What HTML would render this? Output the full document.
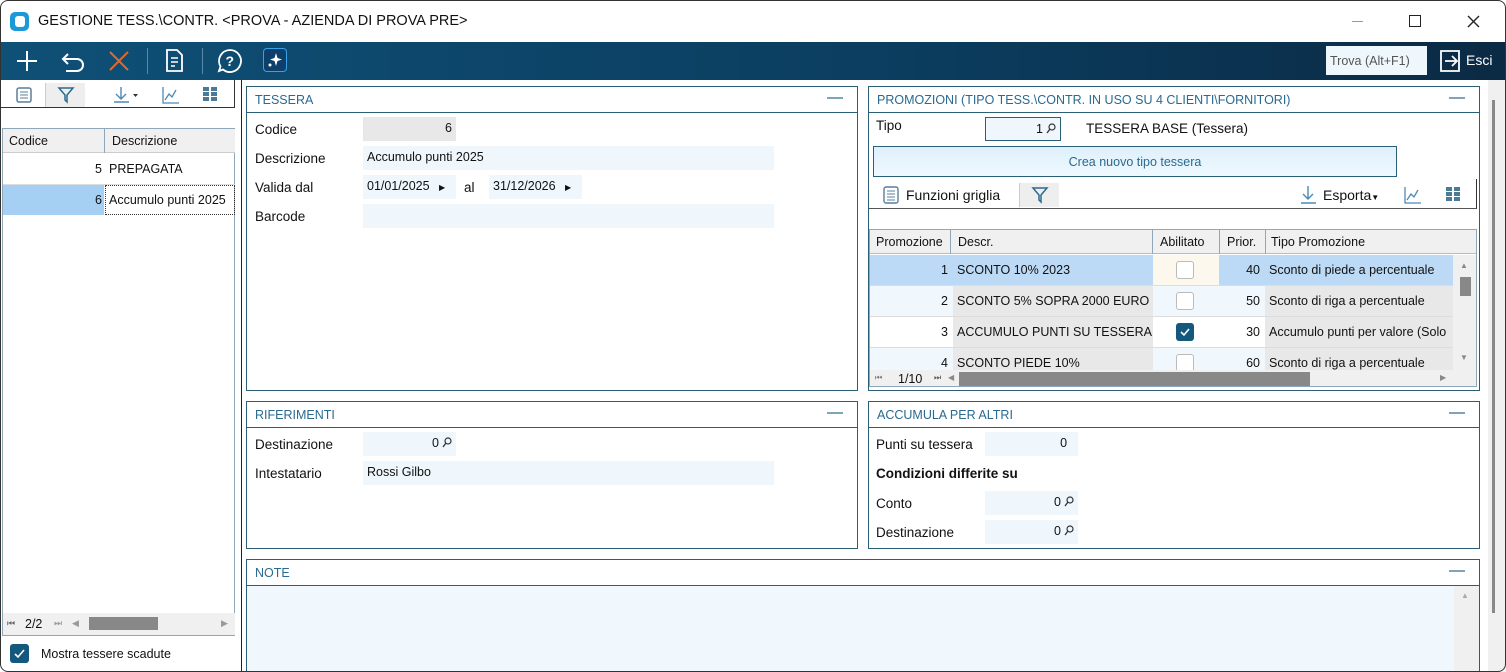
<!DOCTYPE html>
<html><head><meta charset="utf-8"><style>
*{box-sizing:border-box;margin:0;padding:0}
body{width:1506px;height:672px;overflow:hidden;background:#fff;font-family:"Liberation Sans",sans-serif;font-size:13px;color:#111;position:relative}
.a{position:absolute}
.win{left:0;top:0;width:1506px;height:672px;overflow:hidden}
.frame{position:absolute;left:0;top:0;width:1506px;height:672px;border:1px solid #333;border-radius:8px;z-index:10;pointer-events:none}
.panel{position:absolute;border:1px solid #2b5f78;background:#fff}
.ph{height:26px;border-bottom:1px solid #2b5f78;color:#2a6a90;font-size:12.5px;padding:6px 8px}
.min{position:absolute;right:14px;top:10px;width:16px;height:2px;background:#7fa3b8}
.fld{position:absolute;background:#eff7fc;height:24px;padding:4px 4px;font-size:12.5px}
.lbl{position:absolute;font-size:13.5px}
.r{text-align:right}
.tb{position:absolute;top:42px;left:0;width:1506px;height:38px;background:linear-gradient(90deg,#0f5077,#0b3d5f 60%,#0b2a44)}
.sep{position:absolute;top:6px;width:1px;height:26px;background:#5a88a8}
.mg{display:inline-block;width:10px;height:11px;vertical-align:-1px;margin-left:3px}
</style></head><body>
<div class="frame"></div>
<div class="a win">
<div class="a" style="left:10px;top:12px;width:19px;height:19px;background:#1a9ad8;border-radius:5px"><div class="a" style="left:5px;top:4px;width:10px;height:11px;background:#fff;border-radius:3px"></div></div>
<div class="a" style="left:38px;top:13px;font-size:14.5px">GESTIONE TESS.\CONTR. &lt;PROVA - AZIENDA DI PROVA PRE&gt;</div>
<div class="a" style="left:1352px;top:21px;width:11px;height:1px;background:#999"></div>
<div class="a" style="left:1409px;top:15px;width:12px;height:12px;border:1.5px solid #222"></div>
<svg class="a" style="left:1467px;top:15px" width="13" height="13"><path d="M1 1L12 12M12 1L1 12" stroke="#222" stroke-width="1.4"/></svg>
<div class="tb">
<svg class="a" style="left:15px;top:7px" width="24" height="24"><path d="M12 2V22M2 12H22" stroke="#fff" stroke-width="2"/></svg>
<svg class="a" style="left:60px;top:7px" width="26" height="24"><path d="M8 5L3 10L8 15M3 10H17A6 6 0 0 1 17 22H6" stroke="#fff" stroke-width="2" fill="none"/></svg>
<svg class="a" style="left:108px;top:8px" width="22" height="22"><path d="M2 2L20 20M20 2L2 20" stroke="#e06a2c" stroke-width="2"/></svg>
<div class="sep" style="left:147px"></div>
<svg class="a" style="left:163px;top:6px" width="24" height="26"><path d="M4 2H14L19 7V23H4Z" stroke="#fff" stroke-width="1.8" fill="none"/><path d="M8 10H15M8 14H15M8 18H12" stroke="#fff" stroke-width="1.5"/></svg>
<div class="sep" style="left:202px"></div>
<svg class="a" style="left:217px;top:6px" width="26" height="26"><path d="M13 2A11 11 0 1 1 6 21.5L2 23L3.5 18.5A11 11 0 0 1 13 2Z" stroke="#fff" stroke-width="1.8" fill="none"/><text x="8.5" y="18" fill="#fff" font-size="14" font-family="Liberation Sans" font-weight="bold">?</text></svg>
<div class="a" style="left:263px;top:6px;width:24px;height:24px;border:1.5px solid #3aa0e8;border-radius:4px;background:#0c3f6a"><svg width="21" height="21"><path d="M12 4L13.5 9L18 10.5L13.5 12L12 17L10.5 12L6 10.5L10.5 9Z" fill="#fff"/><circle cx="6" cy="16" r="1.5" fill="#fff"/></svg></div>
<div class="a" style="left:1326px;top:4px;width:101px;height:29px;background:#eef7fc;color:#555;padding:8px 4px;font-size:12.5px">Trova (Alt+F1)</div>
<svg class="a" style="left:1439px;top:7px" width="24" height="24"><path d="M2 2H20V22H2Z" stroke="#fff" stroke-width="1.8" fill="none"/><path d="M6 12H17M13 7L18 12L13 17" stroke="#fff" stroke-width="1.8" fill="none"/></svg>
<div class="a" style="left:1466px;top:10px;color:#fff;font-size:14px">Esci</div>
</div>
<div class="a" style="left:1px;top:80px;width:234px;height:28px;border-right:1px solid #333;border-bottom:1px solid #333"></div>
<svg class="a" style="left:15px;top:86px" width="18" height="18"><rect x="2" y="2" width="14" height="14" rx="2" stroke="#5a7f99" fill="none" stroke-width="1.5"/><path d="M5 6H13M5 9H13M5 12H13" stroke="#5a7f99"/></svg>
<div class="a" style="left:45px;top:83px;width:40px;height:24px;background:#eee;border-left:1px solid #ccc"><svg style="margin:3px 11px" width="18" height="18"><path d="M2 2H16L10 9V16L8 14V9Z" stroke="#2a6a90" fill="none" stroke-width="1.5"/></svg></div>
<svg class="a" style="left:112px;top:86px" width="28" height="18"><path d="M9 1V12M4 8L9 13L14 8M2 16H17" stroke="#4a8ab8" stroke-width="1.4" fill="none"/><path d="M21 8H26L23.5 11Z" fill="#333"/></svg>
<svg class="a" style="left:162px;top:86px" width="18" height="18"><path d="M1 1V17H17M3 14L7 8L10 11L14 4" stroke="#4a8ab8" stroke-width="1.3" fill="none"/></svg>
<svg class="a" style="left:203px;top:87px" width="15" height="15" fill="#4a7a9a"><rect x="0" y="0" width="6" height="4"/><rect x="8" y="0" width="6" height="4"/><rect x="0" y="5" width="6" height="4"/><rect x="8" y="5" width="6" height="4"/><rect x="0" y="10" width="6" height="4"/><rect x="8" y="10" width="6" height="4"/></svg>
<div class="a" style="left:2px;top:128px;width:233px;height:508px;border:1px solid #8ea8ba;border-top:none;background:#fff">
 <div class="a" style="left:0;top:0;width:232px;height:25px;background:#f0f0f0;border-top:1px solid #8ea8ba;border-bottom:1px solid #ccc"></div>
 <div class="a" style="left:101px;top:1px;width:1px;height:24px;background:#8ea8ba"></div>
 <div class="a" style="left:6px;top:6px;font-size:12.5px">Codice</div>
 <div class="a" style="left:109px;top:6px;font-size:12.5px">Descrizione</div>
 <div class="a r" style="left:0;top:34px;width:99px;font-size:12.5px">5</div>
 <div class="a" style="left:106px;top:34px;font-size:12.5px">PREPAGATA</div>
 <div class="a" style="left:0;top:56px;width:232px;height:1px;background:#ddd"></div>
 <div class="a" style="left:0;top:57px;width:101px;height:30px;background:#a5cff3"></div>
 <div class="a" style="left:102px;top:57px;width:130px;height:30px;border:1px dotted #333"></div>
 <div class="a r" style="left:0;top:65px;width:99px;font-size:12.5px">6</div>
 <div class="a" style="left:106px;top:65px;font-size:12.5px">Accumulo punti 2025</div>
 <div class="a" style="left:0;top:485px;width:232px;height:22px;background:#f0f0f0"></div>
 <div class="a" style="left:4px;top:490px;font-size:9px;color:#666">⏮</div>
 <div class="a" style="left:22px;top:489px;font-size:12.5px">2/2</div>
 <div class="a" style="left:51px;top:490px;font-size:9px;color:#999">⏭</div>
 <div class="a" style="left:69px;top:490px;font-size:9px;color:#999">◀</div>
 <div class="a" style="left:86px;top:489px;width:69px;height:13px;background:#888"></div>
 <div class="a" style="left:218px;top:490px;font-size:9px;color:#999">▶</div>
</div>
<div class="a" style="left:10px;top:644px;width:19px;height:19px;background:#15587e;border-radius:3px"><svg width="19" height="19"><path d="M5 10L8 13L14 6" stroke="#fff" stroke-width="1.6" fill="none"/></svg></div>
<div class="a" style="left:41px;top:647px;font-size:12.5px">Mostra tessere scadute</div>
<div class="a" style="left:241px;top:80px;width:1px;height:592px;background:#222"></div>
<div class="a" style="left:1488px;top:80px;width:18px;height:592px;background:#f0f0f0"></div>
<div class="a" style="left:1492px;top:100px;width:3px;height:513px;background:#888"></div>

<div class="panel" style="left:246px;top:86px;width:612px;height:305px"><div class="ph">TESSERA</div><div class="min"></div>
<div class="lbl" style="left:8px;top:35px">Codice</div><div class="fld r" style="left:116px;top:30px;width:93px;background:#e8e8e8">6</div>
<div class="lbl" style="left:8px;top:64px">Descrizione</div><div class="fld" style="left:116px;top:59px;width:411px">Accumulo punti 2025</div>
<div class="lbl" style="left:8px;top:93px">Valida dal</div><div class="fld" style="left:116px;top:88px;width:93px">01/01/2025 <span style="font-size:8px;margin-left:6px">▶</span></div>
<div class="lbl" style="left:217px;top:93px">al</div><div class="fld" style="left:242px;top:88px;width:93px">31/12/2026 <span style="font-size:8px;margin-left:6px">▶</span></div>
<div class="lbl" style="left:8px;top:122px">Barcode</div><div class="fld" style="left:116px;top:117px;width:411px"></div>
</div>

<div class="panel" style="left:868px;top:86px;width:612px;height:305px"><div class="ph">PROMOZIONI (TIPO TESS.\CONTR. IN USO SU 4 CLIENTI\FORNITORI)</div><div class="min"></div>
<div class="lbl" style="left:7px;top:31px">Tipo</div>
<div class="fld r" style="left:116px;top:30px;width:76px;border:1px solid #2b5f78">1<svg class="mg" viewBox="0 0 10 11"><circle cx="6" cy="4" r="3" stroke="#333" fill="none" stroke-width="1.2"/><path d="M4 6L1 10" stroke="#333" stroke-width="1.3"/></svg></div>
<div class="lbl" style="left:217px;top:34px">TESSERA BASE (Tessera)</div>
<div class="a" style="left:4px;top:59px;width:524px;height:31px;border:1px solid #2b5f78;background:linear-gradient(#dff0fb,#eef8fe);text-align:center;padding-top:8px;color:#2a6a90;font-size:12.5px">Crea nuovo tipo tessera</div>
<div class="a" style="left:0;top:92px;width:608px;height:30px;border-right:1px solid #333;border-bottom:1px solid #555"></div>
<svg class="a" style="left:13px;top:99px" width="18" height="18"><rect x="2" y="1" width="14" height="16" rx="2" stroke="#5a7f99" fill="none" stroke-width="1.4"/><path d="M5 5H13M5 8H13M5 11H13M5 14H13" stroke="#5a7f99"/></svg>
<div class="lbl" style="left:37px;top:100px;font-size:14px">Funzioni griglia</div>
<div class="a" style="left:150px;top:96px;width:40px;height:24px;background:#eee;border-left:1px solid #ccc"><svg style="margin:3px 11px" width="18" height="18"><path d="M2 2H16L10 9V16L8 14V9Z" stroke="#2a6a90" fill="none" stroke-width="1.5"/></svg></div>
<svg class="a" style="left:430px;top:98px" width="18" height="20"><path d="M9 1V14M4 9L9 14L14 9M2 18H17" stroke="#4a8ab8" stroke-width="1.4" fill="none"/></svg>
<div class="lbl" style="left:454px;top:100px;font-size:14px">Esporta<span style="font-size:8px">▼</span></div>
<svg class="a" style="left:535px;top:99px" width="18" height="18"><path d="M1 1V17H17M3 14L7 8L10 11L14 4" stroke="#4a8ab8" stroke-width="1.3" fill="none"/></svg>
<svg class="a" style="left:577px;top:100px" width="15" height="15" fill="#4a7a9a"><rect x="0" y="0" width="6" height="4"/><rect x="8" y="0" width="6" height="4"/><rect x="0" y="5" width="6" height="4"/><rect x="8" y="5" width="6" height="4"/><rect x="0" y="10" width="6" height="4"/><rect x="8" y="10" width="6" height="4"/></svg>
<div class="a" style="left:0;top:142px;width:608px;height:158px;border:1px solid #8ea8ba;overflow:hidden">
 <div class="a" style="left:0;top:0;width:608px;height:24px;background:#f0f0f0;border-bottom:1px solid #bbb"></div>
 <div class="a" style="left:80px;top:0;width:1px;height:24px;background:#8ea8ba"></div>
 <div class="a" style="left:282px;top:0;width:1px;height:24px;background:#8ea8ba"></div>
 <div class="a" style="left:349px;top:0;width:1px;height:24px;background:#8ea8ba"></div>
 <div class="a" style="left:395px;top:0;width:1px;height:24px;background:#8ea8ba"></div>
 <div class="a" style="left:6px;top:5px;font-size:12.5px">Promozione</div>
 <div class="a" style="left:88px;top:5px;font-size:12.5px">Descr.</div>
 <div class="a" style="left:290px;top:5px;font-size:12.5px">Abilitato</div>
 <div class="a" style="left:357px;top:5px;font-size:12.5px">Prior.</div>
 <div class="a" style="left:401px;top:5px;font-size:12.5px">Tipo Promozione</div>
 <div class="a" style="left:0;top:25px;width:583px;height:30px;background:#bcdaf5"></div>
 <div class="a" style="left:283px;top:25px;width:66px;height:30px;background:#fdf8ee"></div>
 <div class="a" style="left:0;top:56px;width:583px;height:30px;background:#f0f8fd"></div>
 <div class="a" style="left:83px;top:56px;width:200px;height:30px;background:#e8e8e8"></div>
 <div class="a" style="left:395px;top:56px;width:188px;height:30px;background:#e8e8e8"></div>
 <div class="a" style="left:0;top:87px;width:583px;height:30px;background:#fff"></div>
 <div class="a" style="left:83px;top:87px;width:200px;height:30px;background:#e8e8e8"></div>
 <div class="a" style="left:395px;top:87px;width:188px;height:30px;background:#e8e8e8"></div>
 <div class="a" style="left:0;top:118px;width:583px;height:22px;background:#f0f8fd"></div>
 <div class="a" style="left:83px;top:118px;width:200px;height:22px;background:#e8e8e8"></div>
 <div class="a" style="left:395px;top:118px;width:188px;height:22px;background:#e8e8e8"></div>
 <div class="a" style="left:0;top:55px;width:583px;height:1px;background:#ddd"></div>
 <div class="a" style="left:0;top:86px;width:583px;height:1px;background:#ddd"></div>
 <div class="a" style="left:0;top:117px;width:583px;height:1px;background:#ddd"></div>
 <div class="a r" style="left:0;top:33px;width:78px;font-size:12.5px">1</div><div class="a" style="left:87px;top:33px;font-size:12.5px">SCONTO 10% 2023</div>
 <div class="a r" style="left:350px;top:33px;width:40px;font-size:12.5px">40</div><div class="a" style="left:399px;top:33px;font-size:12.5px">Sconto di piede a percentuale</div>
 <div class="a r" style="left:0;top:64px;width:78px;font-size:12.5px">2</div><div class="a" style="left:87px;top:64px;font-size:12.5px">SCONTO 5% SOPRA 2000 EURO</div>
 <div class="a r" style="left:350px;top:64px;width:40px;font-size:12.5px">50</div><div class="a" style="left:399px;top:64px;font-size:12.5px">Sconto di riga a percentuale</div>
 <div class="a r" style="left:0;top:95px;width:78px;font-size:12.5px">3</div><div class="a" style="left:87px;top:95px;font-size:12.5px">ACCUMULO PUNTI SU TESSERA</div>
 <div class="a r" style="left:350px;top:95px;width:40px;font-size:12.5px">30</div><div class="a" style="left:399px;top:95px;font-size:12.5px;width:184px;overflow:hidden;white-space:nowrap">Accumulo punti per valore (Solo</div>
 <div class="a r" style="left:0;top:126px;width:78px;font-size:12.5px">4</div><div class="a" style="left:87px;top:126px;font-size:12.5px">SCONTO PIEDE 10%</div>
 <div class="a r" style="left:350px;top:126px;width:40px;font-size:12.5px">60</div><div class="a" style="left:399px;top:126px;font-size:12.5px">Sconto di riga a percentuale</div>
 <div class="a" style="left:306px;top:31px;width:18px;height:18px;border:1px solid #bbb;border-radius:3px;background:#fff"></div>
 <div class="a" style="left:306px;top:62px;width:18px;height:18px;border:1px solid #bbb;border-radius:3px;background:#fff"></div>
 <div class="a" style="left:306px;top:93px;width:18px;height:18px;border-radius:3px;background:#15587e"><svg width="18" height="18"><path d="M5 9L8 12L13 6" stroke="#fff" stroke-width="1.6" fill="none"/></svg></div>
 <div class="a" style="left:306px;top:124px;width:18px;height:18px;border:1px solid #bbb;border-radius:3px;background:#fff"></div>
 <div class="a" style="left:583px;top:25px;width:25px;height:115px;background:#f0f0f0"></div>
 <div class="a" style="left:590px;top:31px;font-size:8px;color:#888">▲</div>
 <div class="a" style="left:590px;top:47px;width:11px;height:19px;background:#888"></div>
 <div class="a" style="left:590px;top:123px;font-size:8px;color:#888">▼</div>
 <div class="a" style="left:0;top:140px;width:608px;height:18px;background:#f0f0f0"></div>
 <div class="a" style="left:5px;top:143px;font-size:8px;color:#777">⏮</div>
 <div class="a" style="left:28px;top:142px;font-size:12.5px">1/10</div>
 <div class="a" style="left:64px;top:143px;font-size:8px;color:#555">⏭</div>
 <div class="a" style="left:78px;top:143px;font-size:8px;color:#888">◀</div>
 <div class="a" style="left:89px;top:142px;width:351px;height:14px;background:#888"></div>
 <div class="a" style="left:570px;top:143px;font-size:8px;color:#888">▶</div>
</div>
</div>

<div class="panel" style="left:246px;top:401px;width:612px;height:148px"><div class="ph">RIFERIMENTI</div><div class="min"></div>
<div class="lbl" style="left:8px;top:35px">Destinazione</div><div class="fld r" style="left:116px;top:30px;width:93px">0<svg class="mg" viewBox="0 0 10 11"><circle cx="6" cy="4" r="3" stroke="#333" fill="none" stroke-width="1.2"/><path d="M4 6L1 10" stroke="#333" stroke-width="1.3"/></svg></div>
<div class="lbl" style="left:8px;top:64px">Intestatario</div><div class="fld" style="left:116px;top:59px;width:411px">Rossi Gilbo</div>
</div>

<div class="panel" style="left:868px;top:401px;width:612px;height:148px"><div class="ph">ACCUMULA PER ALTRI</div><div class="min"></div>
<div class="lbl" style="left:7px;top:35px">Punti su tessera</div><div class="fld r" style="left:116px;top:30px;width:93px">0&nbsp;&nbsp;</div>
<div class="lbl" style="left:7px;top:64px;font-weight:bold">Condizioni differite su</div>
<div class="lbl" style="left:7px;top:94px">Conto</div><div class="fld r" style="left:116px;top:89px;width:93px">0<svg class="mg" viewBox="0 0 10 11"><circle cx="6" cy="4" r="3" stroke="#333" fill="none" stroke-width="1.2"/><path d="M4 6L1 10" stroke="#333" stroke-width="1.3"/></svg></div>
<div class="lbl" style="left:7px;top:123px">Destinazione</div><div class="fld r" style="left:116px;top:118px;width:93px">0<svg class="mg" viewBox="0 0 10 11"><circle cx="6" cy="4" r="3" stroke="#333" fill="none" stroke-width="1.2"/><path d="M4 6L1 10" stroke="#333" stroke-width="1.3"/></svg></div>
</div>

<div class="panel" style="left:246px;top:559px;width:1234px;height:120px"><div class="ph">NOTE</div><div class="min"></div>
<div class="a" style="left:0;top:26px;width:1232px;height:94px;background:#f0f8fd"></div>
<div class="a" style="left:1207px;top:26px;width:25px;height:94px;background:#f0f0f0"></div>
<div class="a" style="left:1214px;top:31px;font-size:8px;color:#aaa">▲</div>
</div>
</div>
</body></html>
